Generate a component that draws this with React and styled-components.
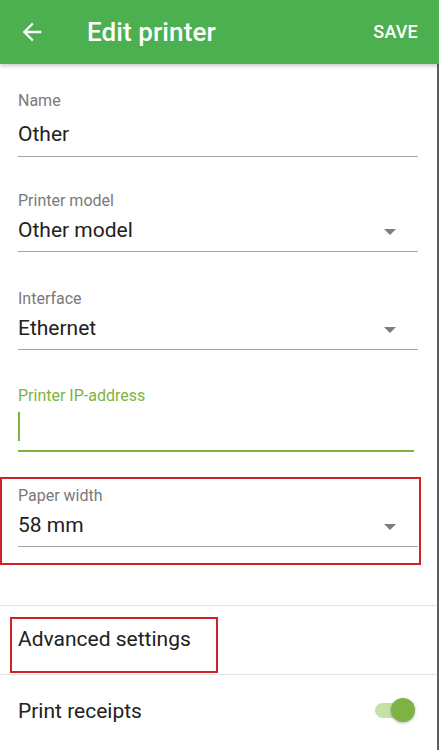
import React from "react"
import styled, {createGlobalStyle} from "styled-components"

const colors = {
  green: "#4caf50",
  accent: "#7cb342",
  accentLight: "#c5e1a5",
  label: "#7a7a7a",
  text: "#212121",
  line: "#a3a3a3",
  divider: "#e4e4e4",
  mark: "#d0212a",
}

const GlobalStyle = createGlobalStyle`
  html, body {
    margin: 0;
    padding: 0;
    background: #ffffff;
  }
  body {
    font-family: Roboto, "Noto Sans", Arial, sans-serif;
    -webkit-font-smoothing: antialiased;
  }
`

const Screen = styled.div`
  width: 439px;
  height: 750px;
  display: flex;
  flex-direction: column;
  overflow: hidden;
  background: #ffffff;
`

const Toolbar = styled.header`
  height: 64px;
  flex-shrink: 0;
  display: flex;
  align-items: center;
  background: ${colors.green};
  color: #ffffff;
  padding: 0 21px 0 18px;
  box-sizing: border-box;
  box-shadow: 0 2px 4px rgba(0, 0, 0, 0.22);
  position: relative;
  z-index: 1;
`

const BackButton = styled.div`
  width: 28px;
  height: 28px;
  display: flex;
  align-items: center;
  justify-content: center;
  margin-right: 41px;
  margin-top: -1px;
`

const Title = styled.h1`
  flex: 1;
  margin: 0;
  font-size: 26px;
  font-weight: 500;
  letter-spacing: 0.1px;
`

const SaveButton = styled.div`
  font-size: 18px;
  font-weight: 500;
  letter-spacing: 0.2px;
  margin-top: -1px;
`

const Content = styled.main`
  flex: 1;
  display: flex;
  flex-direction: column;
  border-right: 2px solid #5e5e5e;
`

const Form = styled.div`
  display: flex;
  flex-direction: column;
  padding: 28px 19px 0 18px;
`

const Field = styled.div`
  display: flex;
  flex-direction: column;
  margin-top: ${p => p.$gap || 0}px;
`

const Label = styled.div`
  font-size: 16px;
  line-height: 18px;
  color: ${p => (p.$active ? colors.accent : colors.label)};
`

const ValueRow = styled.div`
  display: flex;
  align-items: center;
  justify-content: space-between;
  margin-top: ${p => p.$gap}px;
  height: 28px;
`

const Value = styled.div`
  font-size: 21px;
  line-height: 28px;
  color: ${colors.text};
`

const Caret = styled.div`
  width: 0;
  height: 0;
  border-left: 6px solid transparent;
  border-right: 6px solid transparent;
  border-top: 6px solid #7d7d7d;
  margin-right: 22px;
  margin-top: 3px;
`

const CursorRow = styled.div`
  padding-top: 7px;
  height: 29px;
`

const Cursor = styled.div`
  width: 2px;
  height: 29px;
  background: ${colors.accent};
`

const Underline = styled.div`
  margin-top: ${p => p.$gap}px;
  height: ${p => (p.$active ? 2 : 1)}px;
  margin-right: ${p => (p.$active ? 4 : 0)}px;
  background: ${p => (p.$active ? colors.accent : colors.line)};
`

const Highlight = styled.div`
  margin: 25px -3px 0 -18px;
  padding: 8px 1px 16px 16px;
  border: 2px solid ${colors.mark};
`

const Divider = styled.div`
  height: 1px;
  background: ${colors.divider};
  margin-top: ${p => p.$gap || 0}px;
`

const ActionRow = styled.div`
  padding: 11px 0 1px 10px;
  display: flex;
`

const ActionMark = styled.div`
  border: 2px solid ${colors.mark};
  padding: 6px 16px 18px 6px;
  width: 182px;
`

const RowText = styled.div`
  font-size: 21px;
  line-height: 28px;
  color: ${colors.text};
`

const SwitchRow = styled.div`
  height: 72px;
  display: flex;
  align-items: center;
  justify-content: space-between;
  padding: 0 22px 0 18px;
`

const Switch = styled.div`
  position: relative;
  width: 40px;
  height: 24px;
  display: flex;
  align-items: center;
  margin-top: -2px;
`

const Track = styled.div`
  width: 36px;
  height: 15px;
  border-radius: 8px;
  background: ${colors.accentLight};
`

const Thumb = styled.div`
  position: absolute;
  right: 0;
  top: 0;
  width: 24px;
  height: 24px;
  border-radius: 50%;
  background: ${colors.accent};
  box-shadow: 0 1px 3px rgba(0, 0, 0, 0.3);
`

function BackArrow() {
  return (
    <svg width="28" height="28" viewBox="0 0 24 24" fill="#ffffff">
      <path d="M20 11H7.83l5.59-5.59L12 4l-8 8 8 8 1.41-1.41L7.83 13H20v-2z" />
    </svg>
  )
}

function SelectField({label, value, gap}) {
  return (
    <Field $gap={gap}>
      <Label>{label}</Label>
      <ValueRow $gap={6}>
        <Value>{value}</Value>
        <Caret />
      </ValueRow>
      <Underline $gap={7} />
    </Field>
  )
}

export default function App() {
  return (
    <Screen>
      <GlobalStyle />
      <Toolbar>
        <BackButton>
          <BackArrow />
        </BackButton>
        <Title>Edit printer</Title>
        <SaveButton>SAVE</SaveButton>
      </Toolbar>

      <Content>
        <Form>
          <Field>
            <Label>Name</Label>
            <ValueRow $gap={10}>
              <Value>Other</Value>
            </ValueRow>
            <Underline $gap={8} />
          </Field>

          <SelectField label="Printer model" value="Other model" gap={35} />
          <SelectField label="Interface" value="Ethernet" gap={38} />

          <Field $gap={37}>
            <Label $active>Printer IP-address</Label>
            <CursorRow>
              <Cursor />
            </CursorRow>
            <Underline $gap={9} $active />
          </Field>

          <Highlight>
            <SelectField label="Paper width" value="58 mm" gap={0} />
          </Highlight>
        </Form>

        <Divider $gap={40} />
        <ActionRow>
          <ActionMark>
            <RowText>Advanced settings</RowText>
          </ActionMark>
        </ActionRow>
        <Divider />

        <SwitchRow>
          <RowText>Print receipts</RowText>
          <Switch>
            <Track />
            <Thumb />
          </Switch>
        </SwitchRow>
      </Content>
    </Screen>
  )
}
